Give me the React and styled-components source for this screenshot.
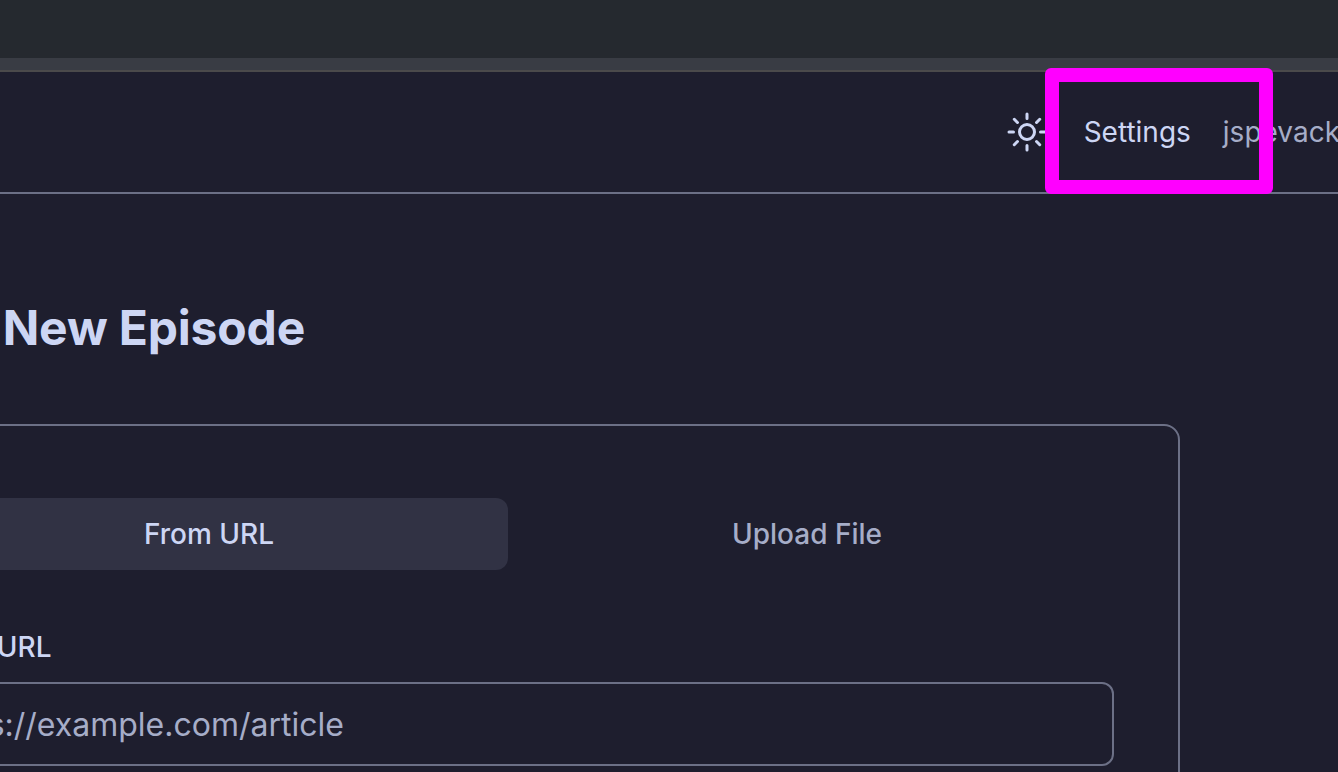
import React from "react";
import styled, { createGlobalStyle } from "styled-components";

const Global = createGlobalStyle`
  html, body { margin: 0; padding: 0; background: #1e1e2e; }
  body { font-family: Inter, "Liberation Sans", sans-serif; overflow: hidden; }
`;

const Viewport = styled.div`
  position: relative;
  width: 1338px;
  height: 772px;
  overflow: hidden;
  background: #1e1e2e;
  color: #cdd6f4;
`;

const BrowserBar = styled.div`
  height: 58px;
  background: #25292f;
`;

const BrowserStrip = styled.div`
  height: 12px;
  background: #393c44;
  border-bottom: 2px solid #4b4a4b;
`;

const Nav = styled.nav`
  display: flex;
  align-items: center;
  justify-content: flex-end;
  height: 120px;
  margin-right: -2px;
  border-bottom: 2px solid #6c7086;
`;

const ThemeButton = styled.button`
  display: flex;
  align-items: center;
  justify-content: center;
  width: 48px;
  height: 48px;
  padding: 0;
  margin-right: 33px;
  border: 0;
  background: none;
  color: #cdd6f4;
`;

const NavLink = styled.a`
  font-size: 28px;
  line-height: 40px;
  white-space: nowrap;
  color: ${(p) => (p.$muted ? "#a6adc8" : "#cdd6f4")};
  margin-right: ${(p) => p.$gap || 0}px;
`;

const Main = styled.main`
  width: 1344px;
  margin-left: -164px;
  padding-top: 102px;
`;

const Title = styled.h1`
  margin: 0 0 64px;
  font-size: 48px;
  line-height: 64px;
  font-weight: 700;
  letter-spacing: -0.17px;
  white-space: nowrap;
  color: #cdd6f4;
`;

const Card = styled.section`
  box-sizing: border-box;
  width: 1344px;
  height: 600px;
  padding: 64px;
  border: 2px solid #6c7086;
  border-radius: 16px;
`;

const TabList = styled.div`
  display: grid;
  grid-template-columns: 1fr 1fr;
  padding: 8px;
  margin-bottom: 49px;
`;

const Tab = styled.button`
  height: 72px;
  padding: 0;
  border: 0;
  border-radius: 12px;
  font-family: inherit;
  font-size: 28px;
  font-weight: 500;
  background: ${(p) => (p.$active ? "#313244" : "transparent")};
  color: ${(p) => (p.$active ? "#cdd6f4" : "#a6adc8")};
`;

const Label = styled.label`
  display: block;
  margin-bottom: 15px;
  font-size: 28px;
  line-height: 40px;
  font-weight: 500;
  color: #cdd6f4;
`;

const UrlInput = styled.input`
  box-sizing: border-box;
  display: block;
  width: 100%;
  height: 84px;
  padding: 0 24px 0 25px;
  border: 2px solid #6c7086;
  border-radius: 12px;
  background: transparent;
  font-family: inherit;
  font-size: 32px;
  color: #cdd6f4;
  outline: none;
  &::placeholder { color: #a6adc8; opacity: 1; }
`;

const Highlight = styled.div`
  position: absolute;
  left: 1045px;
  top: 68px;
  box-sizing: border-box;
  width: 228px;
  height: 126px;
  border: 14px solid #ff00ff;
  border-radius: 6px;
  pointer-events: none;
`;

const SunIcon = () => (
  <svg width="48" height="48" viewBox="0 0 24 24" fill="none" stroke="currentColor" strokeWidth="1.5" strokeLinecap="round" strokeLinejoin="round">
    <path d="M12 3v2.25m6.364.386-1.591 1.591M21 12h-2.25m-.386 6.364-1.591-1.591M12 18.75V21m-4.773-4.227-1.591 1.591M5.25 12H3m4.227-4.773L5.636 5.636M15.75 12a3.75 3.75 0 1 1-7.5 0 3.75 3.75 0 0 1 7.5 0Z" />
  </svg>
);

export default function App() {
  return (
    <Viewport>
      <Global />
      <BrowserBar />
      <BrowserStrip />
      <Nav>
        <ThemeButton aria-label="Toggle theme"><SunIcon /></ThemeButton>
        <NavLink $gap={32}>Settings</NavLink>
        <NavLink $muted>jspevack</NavLink>
      </Nav>
      <Main>
        <Title>Create New Episode</Title>
        <Card>
          <TabList>
            <Tab $active>From URL</Tab>
            <Tab>Upload File</Tab>
          </TabList>
          <Label>Article URL</Label>
          <UrlInput placeholder="https://example.com/article" readOnly />
        </Card>
      </Main>
      <Highlight />
    </Viewport>
  );
}
